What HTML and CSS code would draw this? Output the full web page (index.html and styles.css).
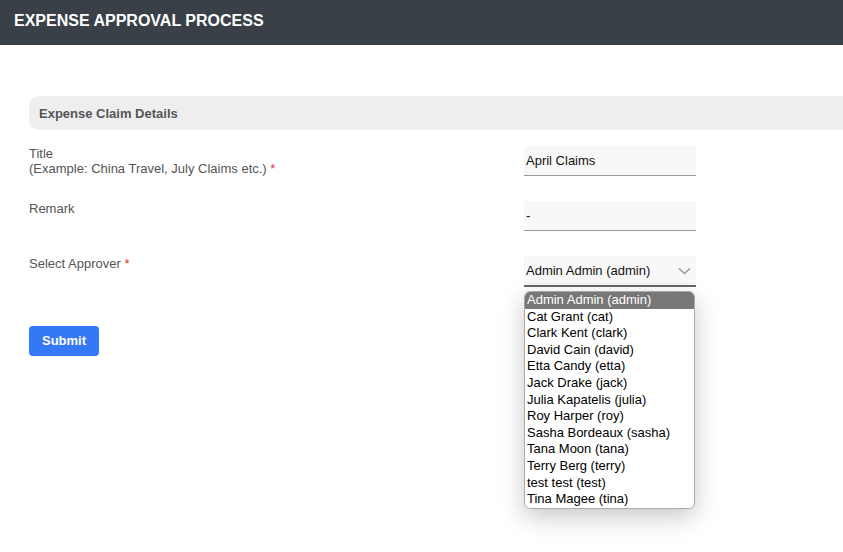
FILE: index.html
```html
<!DOCTYPE html>
<html>
<head>
<meta charset="utf-8">
<link rel="stylesheet" href="styles.css">
</head>
<body>
<header class="topbar">EXPENSE APPROVAL PROCESS</header>
<main class="content">
  <div class="section-bar">Expense Claim Details</div>
  <div class="form">
    <div class="row">
      <div class="label">Title<br>(Example: China Travel, July Claims etc.) <span class="req">*</span></div>
      <div class="field"><div class="input">April Claims</div></div>
    </div>
    <div class="row">
      <div class="label">Remark</div>
      <div class="field"><div class="input">-</div></div>
    </div>
    <div class="row">
      <div class="label">Select Approver <span class="req">*</span></div>
      <div class="field">
        <div class="select">
          <span>Admin Admin (admin)</span>
          <svg class="chev" width="13" height="8" viewBox="0 0 13 8"><path d="M1 1.5 L6.5 6.5 L12 1.5" fill="none" stroke="#999" stroke-width="1.6"/></svg>
        </div>
        <ul class="dropdown">
          <li class="sel">Admin Admin (admin)</li>
          <li>Cat Grant (cat)</li>
          <li>Clark Kent (clark)</li>
          <li>David Cain (david)</li>
          <li>Etta Candy (etta)</li>
          <li>Jack Drake (jack)</li>
          <li>Julia Kapatelis (julia)</li>
          <li>Roy Harper (roy)</li>
          <li>Sasha Bordeaux (sasha)</li>
          <li>Tana Moon (tana)</li>
          <li>Terry Berg (terry)</li>
          <li>test test (test)</li>
          <li>Tina Magee (tina)</li>
        </ul>
      </div>
    </div>
  </div>
  <button class="submit">Submit</button>
</main>
</body>
</html>
```
FILE: styles.css
```css
html, body {
  margin: 0;
  padding: 0;
  background: #fff;
  font-family: "Liberation Sans", Arial, sans-serif;
  font-size: 13px;
  color: #555;
}
body {
  min-height: 100vh;
}
.topbar {
  height: 45px;
  background: #394047;
  color: #fff;
  font-weight: bold;
  font-size: 16px;
  line-height: 42px;
  padding-left: 14px;
}
.content {
  padding: 51px 0 0 29px;
}
.section-bar {
  height: 34px;
  line-height: 35px;
  background: #eeeeee;
  border-radius: 10px 0 0 10px;
  padding-left: 10px;
  font-weight: bold;
  color: #555;
}
.form {
  display: flex;
  flex-direction: column;
  gap: 25px;
  margin-top: 16px;
}
.row {
  display: grid;
  grid-template-columns: 495px 172px;
}
.label {
  line-height: 15px;
}
.req { color: #e53935; }
.field { position: relative; }
.input {
  height: 29px;
  line-height: 29px;
  background: #f8f8f8;
  border-bottom: 1px solid #999;
  padding-left: 2px;
  color: #111;
}
.select {
  height: 29px;
  background: #f8f8f8;
  border-bottom: 2px solid #666;
  padding: 0 5px 0 2px;
  display: flex;
  align-items: center;
  justify-content: space-between;
  color: #111;
}
.dropdown {
  position: absolute;
  top: 35px;
  left: 0;
  width: 169px;
  margin: 0;
  padding: 0;
  list-style: none;
  background: #fff;
  border: 1px solid #aaa;
  border-radius: 6px;
  box-shadow: 0 8px 24px rgba(0,0,0,0.22);
  overflow: hidden;
  z-index: 5;
}
.dropdown li {
  line-height: 16.6px;
  padding-left: 2px;
  color: #000;
  white-space: nowrap;
}
.dropdown li.sel {
  background: #777;
  color: #fff;
}
.submit {
  display: block;
  margin-top: 39px;
  width: 70px;
  height: 30px;
  border: none;
  border-radius: 4px;
  background: #3578f7;
  color: #fff;
  font-family: "Liberation Sans", Arial, sans-serif;
  font-weight: bold;
  font-size: 13px;
  line-height: 28px;
  padding: 0;
}
```
